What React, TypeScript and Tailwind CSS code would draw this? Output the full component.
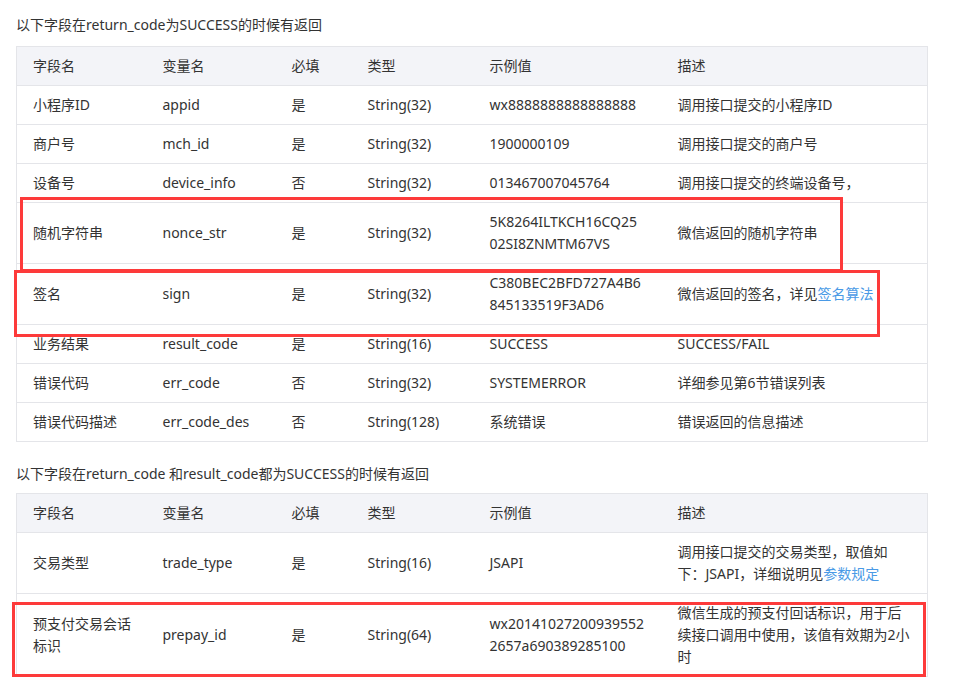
import React from "react";

type Cell = React.ReactNode;

const Link = ({ children }: { children: React.ReactNode }) => (
  <span className="text-[#4a9ae6]">{children}</span>
);

const rows1: Cell[][] = [
  ["小程序ID", "appid", "是", "String(32)", "wx8888888888888888", "调用接口提交的小程序ID"],
  ["商户号", "mch_id", "是", "String(32)", "1900000109", "调用接口提交的商户号"],
  ["设备号", "device_info", "否", "String(32)", "013467007045764", "调用接口提交的终端设备号，"],
  [
    "随机字符串",
    "nonce_str",
    "是",
    "String(32)",
    <>5K8264ILTKCH16CQ25<br />02SI8ZNMTM67VS</>,
    "微信返回的随机字符串",
  ],
  [
    "签名",
    "sign",
    "是",
    "String(32)",
    <>C380BEC2BFD727A4B6<br />845133519F3AD6</>,
    <>微信返回的签名，详见<Link>签名算法</Link></>,
  ],
  ["业务结果", "result_code", "是", "String(16)", "SUCCESS", "SUCCESS/FAIL"],
  ["错误代码", "err_code", "否", "String(32)", "SYSTEMERROR", "详细参见第6节错误列表"],
  ["错误代码描述", "err_code_des", "否", "String(128)", "系统错误", "错误返回的信息描述"],
];

const rows2: Cell[][] = [
  [
    "交易类型",
    "trade_type",
    "是",
    "String(16)",
    "JSAPI",
    <>调用接口提交的交易类型，取值如<br />下：JSAPI，详细说明见<Link>参数规定</Link></>,
  ],
  [
    <>预支付交易会话<br />标识</>,
    "prepay_id",
    "是",
    "String(64)",
    <>wx20141027200939552<br />2657a690389285100</>,
    <>微信生成的预支付回话标识，用于后<br />续接口调用中使用，该值有效期为2小<br />时</>,
  ],
];

const headers = ["字段名", "变量名", "必填", "类型", "示例值", "描述"];

function DataTable({ rows }: { rows: Cell[][] }) {
  return (
    <table className="w-[911px] table-fixed border border-[#e4e5e9] text-left">
      <colgroup>
        <col className="w-[130px]" />
        <col className="w-[129px]" />
        <col className="w-[76px]" />
        <col className="w-[122px]" />
        <col className="w-[188px]" />
        <col className="w-[266px]" />
      </colgroup>
      <thead>
        <tr className="bg-[#f3f4f8]">
          {headers.map((h) => (
            <th key={h} className="px-4 py-2 font-normal align-middle">
              {h}
            </th>
          ))}
        </tr>
      </thead>
      <tbody>
        {rows.map((r, i) => (
          <tr key={i} className="border-t border-[#e4e5e9]">
            {r.map((c, j) => (
              <td key={j} className="px-4 py-2 align-middle whitespace-nowrap">
                {c}
              </td>
            ))}
          </tr>
        ))}
      </tbody>
    </table>
  );
}

export default function App() {
  return (
    <div
      className="relative w-[963px] h-[694px] overflow-hidden bg-white px-4 pt-[14px] text-[14px] leading-[22px] text-[#333]"
      style={{ fontFamily: '"Noto Sans", "Noto Sans CJK SC", sans-serif' }}
    >
      <p>以下字段在return_code为SUCCESS的时候有返回</p>
      <div className="mt-[10px]">
        <DataTable rows={rows1} />
      </div>
      <p className="mt-[21px]">以下字段在return_code 和result_code都为SUCCESS的时候有返回</p>
      <div className="mt-[8px]">
        <DataTable rows={rows2} />
      </div>

      <div className="pointer-events-none absolute left-[20px] top-[197px] h-[75px] w-[823px] border-[3px] border-[#fd3a3a]" />
      <div className="pointer-events-none absolute left-[14px] top-[270px] h-[67px] w-[866px] border-[3px] border-[#fd3a3a]" />
      <div className="pointer-events-none absolute left-[12px] top-[602px] h-[75px] w-[914px] border-[3px] border-[#fd3a3a]" />
    </div>
  );
}
